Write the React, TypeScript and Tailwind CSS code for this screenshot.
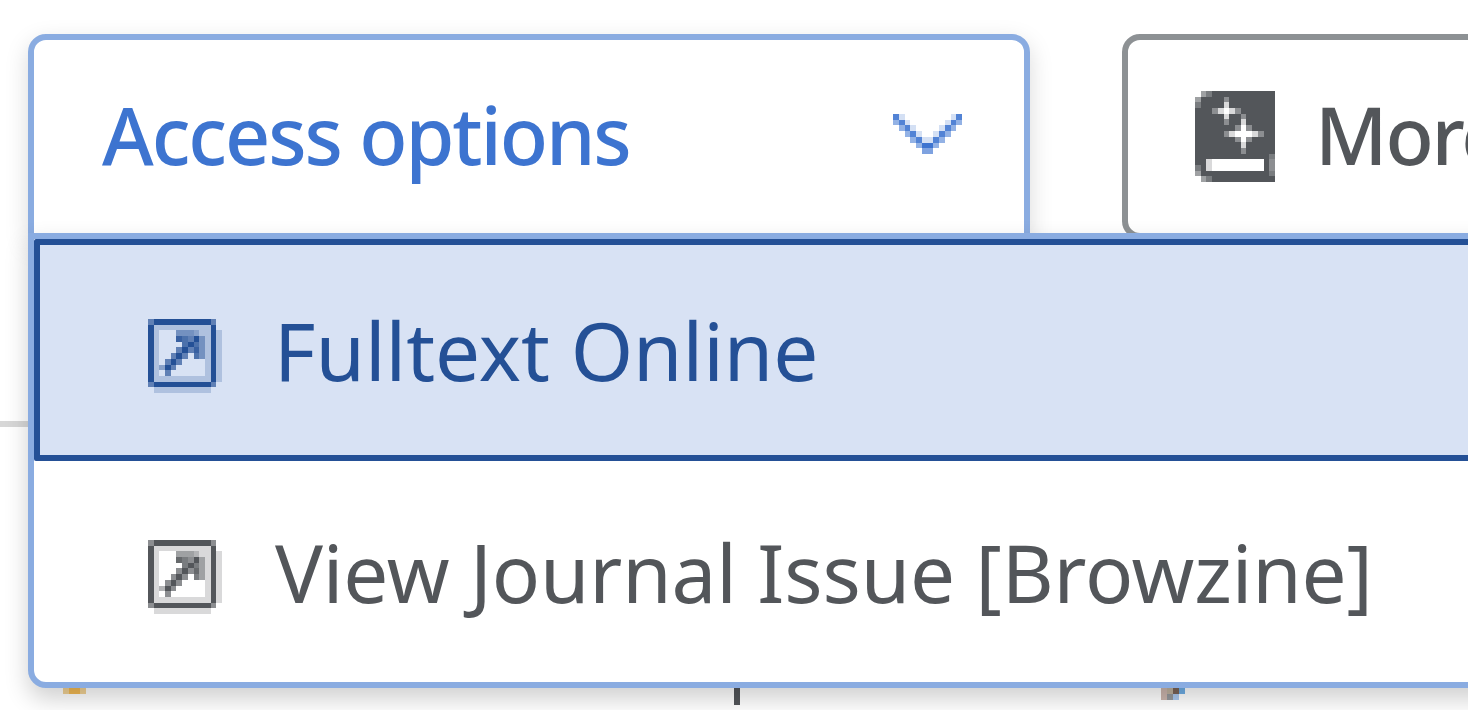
const externalIcon = [
    "6999999999960",
    "9222222222290",
    "9200055542292",
    "9200087695292",
    "9200007975292",
    "9200069685292",
    "9200696075292",
    "9206960000292",
    "9249600000292",
    "9206000000292",
    "9222222222292",
    "6999999999960",
    "0222222222200",
]

const chevronIcon = [
    "820000000028",
    "582000000285",
    "058200002850",
    "005820028500",
    "000582285000",
    "000059950000",
    "000006600000",
]

const bookIcon = [
    "05799999999999",
    "59999699999999",
    "79999299999999",
    "99962026999999",
    "99999299699999",
    "99999699299999",
    "99999996069999",
    "99999620002699",
    "99999996069999",
    "99999999299999",
    "99999999699999",
    "99999999999997",
    "99200000000096",
    "79200000000096",
    "59999999999997",
    "05799999999999",
]

// each digit is the strength of one square of the icon, 9 is solid
function GridIcon({ rows, className }: { rows: string[]; className: string }) {
    return (
        <svg
            className={className}
            viewBox={`0 0 ${rows[0].length} ${rows.length}`}
            preserveAspectRatio="none"
            shapeRendering="crispEdges"
            fill="currentColor"
            aria-hidden="true"
        >
            {rows.map((row, y) =>
                row.split("").map((level, x) =>
                    level === "0" ? null : (
                        <rect key={`${x}-${y}`} x={x} y={y} width="1" height="1" opacity={Number(level) / 9} />
                    )
                )
            )}
        </svg>
    )
}

function Toolbar() {
    return (
        <div className="flex gap-[92px] pt-[34px] pl-[28px]">
            <button className="flex h-[205px] w-[1002px] shrink-0 items-center justify-between rounded-t-[18px] border-[6px] border-[#8aace1] bg-white pr-[62px] pb-[5px] pl-[68px] text-[#3d74d0] shadow-[0_8px_23px_rgba(0,0,0,0.15)]">
                <span className="text-[79px] leading-none font-medium tracking-[-2.1px] whitespace-nowrap">Access options</span>
                <GridIcon rows={chevronIcon} className="h-[40px] w-[69px]" />
            </button>
            <button className="flex h-[205px] w-[800px] shrink-0 items-center rounded-[18px] border-[6px] border-[#8d9194] bg-white pb-[5px] pl-[67px] text-[#53565a]">
                <GridIcon rows={bookIcon} className="mt-[4px] h-[91px] w-[80px]" />
                <span className="ml-[40px] text-[79px] leading-none font-medium tracking-[-2.1px] whitespace-nowrap">More</span>
            </button>
        </div>
    )
}

function AccessMenu() {
    return (
        <ul className="relative z-10 -mt-[6px] ml-[28px] h-[455px] w-[1600px] rounded-bl-[18px] border-[6px] border-[#8aace1] bg-white shadow-[0_11px_23px_rgba(0,0,0,0.19)]">
            <li className="flex h-[222px] items-center rounded-[2px] border-[6px] border-[#245096] bg-[#d8e2f4] pl-[108px] text-[#245096]">
                <GridIcon rows={externalIcon} className="mt-[11px] h-[74px] w-[74px]" />
                <span className="ml-[52px] text-[80px] leading-none whitespace-nowrap">Fulltext Online</span>
            </li>
            <li className="flex h-[221px] items-center pl-[114px] text-[#53565a]">
                <GridIcon rows={externalIcon} className="mt-[11px] h-[74px] w-[74px]" />
                <span className="ml-[53px] text-[80px] leading-none tracking-[-0.15px] whitespace-nowrap">View Journal Issue [Browzine]</span>
            </li>
        </ul>
    )
}

function ContentBelow() {
    return (
        <div className="flex h-[22px] items-start">
            <div className="ml-[63px] h-[6px] w-[23px] border-x-[6px] border-[#f2d295] bg-[#f3ba54]"></div>
            <div className="ml-[648px] h-[17px] w-[6px] bg-[#53565a]"></div>
            <svg className="ml-[421px] h-[12px] w-[24px]" viewBox="0 0 24 12" shapeRendering="crispEdges">
                <rect width="6" height="12" fill="#cbb5ad" />
                <rect x="6" width="6" height="6" fill="#beb19f" />
                <rect x="12" width="6" height="6" fill="#7a6459" />
                <rect x="18" width="6" height="6" fill="#6faee6" />
                <rect x="6" y="6" width="6" height="6" fill="#95989c" />
                <rect x="12" y="6" width="6" height="6" fill="#aac8ef" />
            </svg>
        </div>
    )
}

function App() {
    return (
        <main className="relative h-[710px] w-[1468px] overflow-hidden bg-white font-['Noto_Sans',sans-serif]">
            <div className="absolute top-[421px] left-0 h-[6px] w-[28px] bg-[#d7d7d7]"></div>
            <Toolbar />
            <AccessMenu />
            <ContentBelow />
        </main>
    )
}

export default App
